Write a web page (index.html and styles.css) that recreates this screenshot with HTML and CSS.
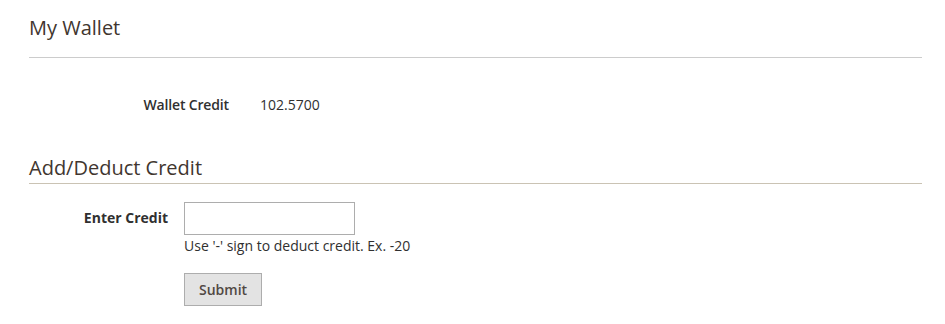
FILE: index.html
```html
<!DOCTYPE html>
<html lang="en">
<head>
  <meta charset="UTF-8" />
  <meta name="viewport" content="width=device-width, initial-scale=1.0"/>
  <title>My Wallet</title>
  <link rel="stylesheet" href="styles.css">
</head>
<body>

  <div class="page">
    <h1 class="page-title">My Wallet</h1>

    <div class="wallet-info">
      <span class="wallet-label">Wallet Credit</span>
      <span class="wallet-value">102.5700</span>
    </div>

    <!-- Add / deduct form -->
    <h2 class="section-title">Add/Deduct Credit</h2>

    <form class="credit-form" onsubmit="return false;">
      <label class="field-label" for="credit">Enter Credit</label>
      <div class="field-control">
        <input type="text" id="credit" class="credit-input">
        <div class="field-note">Use '-' sign to deduct credit. Ex. -20</div>
        <button type="submit" class="submit-btn">Submit</button>
      </div>
    </form>
  </div>

</body>
</html>
```

FILE: styles.css
```css
body {
  margin: 0;
  font-family: 'Open Sans', sans-serif;
  font-size: 14px;
  color: #303030;
  background-color: #fff;
}

.page {
  padding: 16px 23px 0 29px;
}

.page-title {
  margin: 0;
  font-size: 20px;
  font-weight: 400;
  line-height: 24px;
  color: #41362f;
  padding-bottom: 17px;
  border-bottom: 1px solid #cccccc;
}

.wallet-info {
  display: grid;
  grid-template-columns: 200px auto;
  column-gap: 31px;
  margin-top: 37px;
  line-height: 20px;
}

.wallet-label {
  text-align: right;
  font-weight: 600;
  letter-spacing: -0.15px;
}

.section-title {
  margin: 41px 0 0;
  font-size: 20px;
  font-weight: 400;
  line-height: 24px;
  color: #41362f;
  padding-bottom: 3px;
  border-bottom: 1px solid #cac3b4;
}

.credit-form {
  display: grid;
  grid-template-columns: 139px auto;
  column-gap: 16px;
  margin-top: 18px;
}

.field-label {
  text-align: right;
  font-weight: 700;
  line-height: 20px;
  padding-top: 6px;
}

.field-control {
  display: flex;
  flex-direction: column;
  align-items: flex-start;
}

.credit-input {
  box-sizing: border-box;
  width: 171px;
  height: 33px;
  margin: 0;
  border: 1px solid #adadad;
  border-radius: 0;
  padding: 0 8px;
  font-family: 'Open Sans', sans-serif;
  font-size: 14px;
}

.field-note {
  line-height: 20px;
  margin-top: 1px;
}

.submit-btn {
  margin-top: 17px;
  box-sizing: border-box;
  height: 33px;
  padding: 0 14px;
  background-color: #e3e3e3;
  border: 1px solid #adadad;
  border-radius: 0;
  color: #514943;
  font-family: 'Open Sans', sans-serif;
  font-size: 14px;
  font-weight: 600;
  cursor: pointer;
}

.submit-btn:hover {
  background-color: #dbdbdb;
}
```
